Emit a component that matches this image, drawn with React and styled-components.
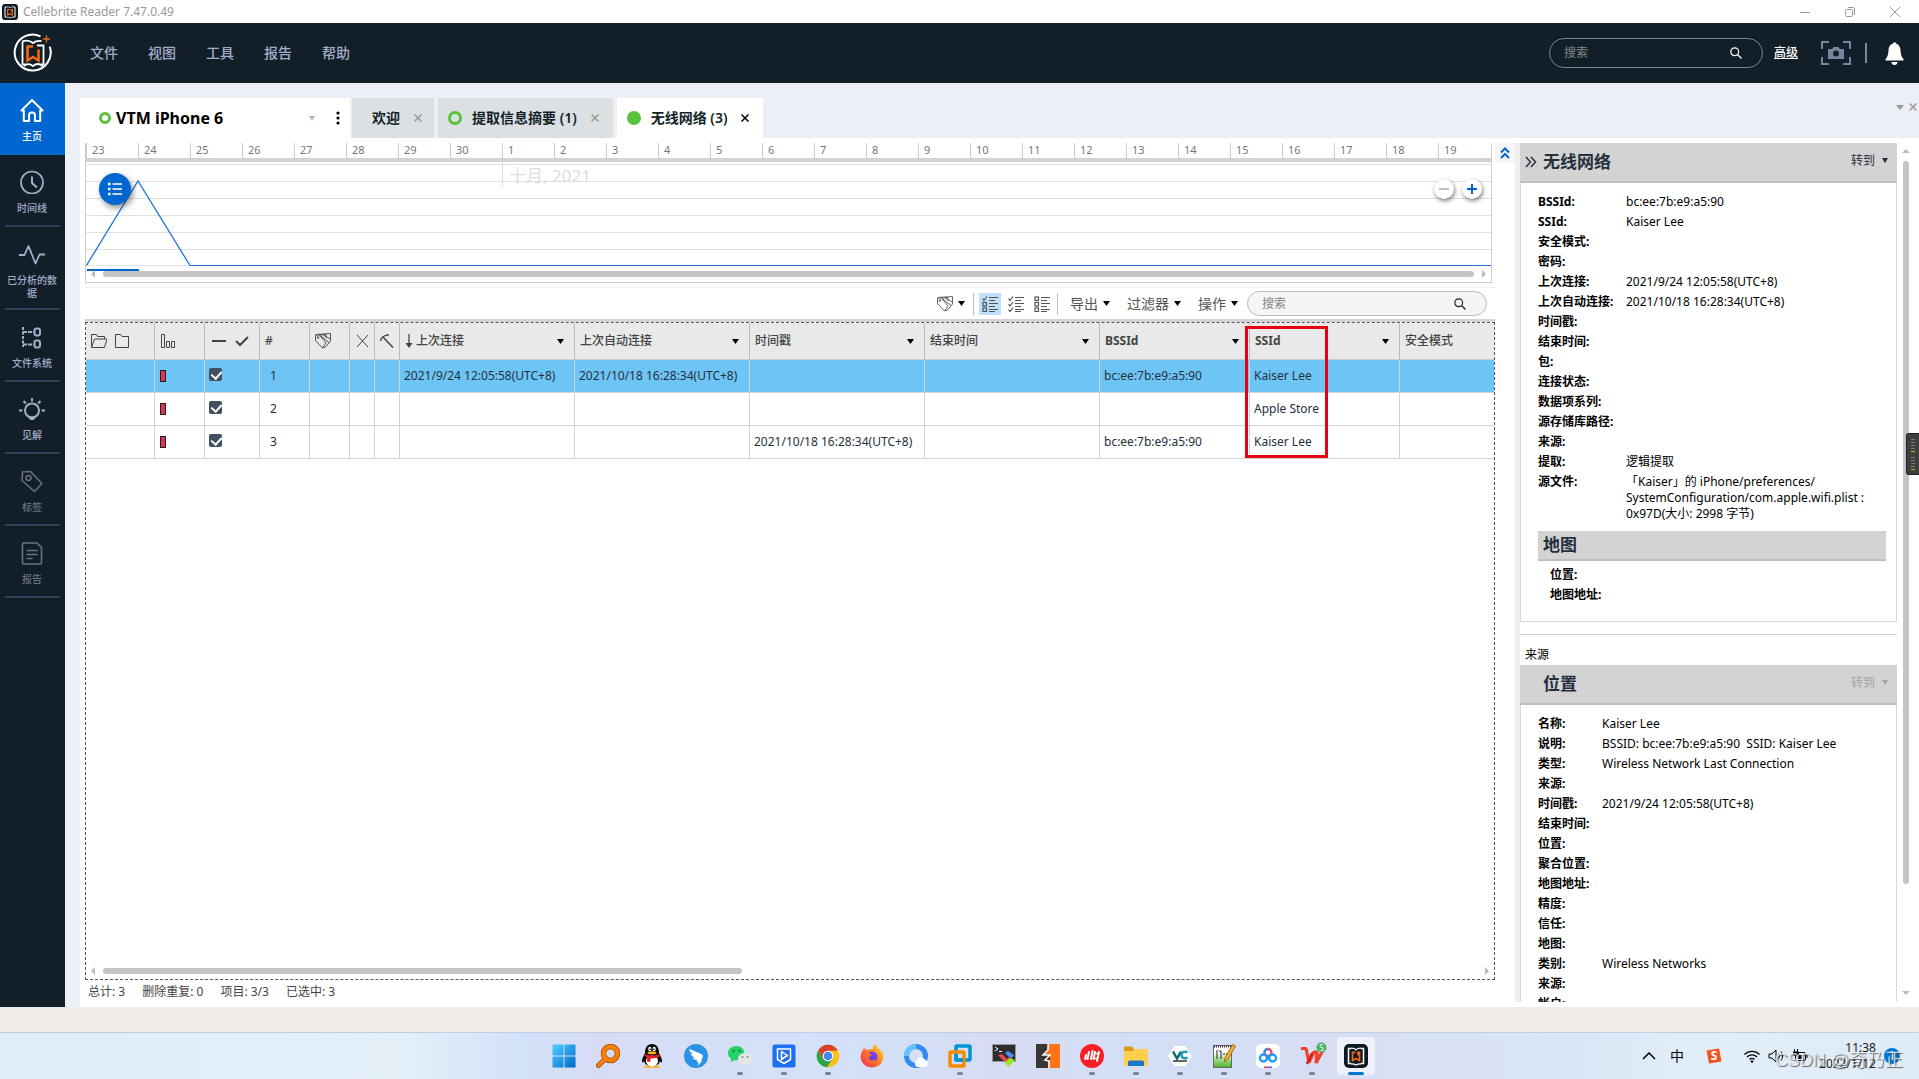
import React from 'react';
import styled, { createGlobalStyle, css } from 'styled-components';

const GlobalStyle = createGlobalStyle`
  * {
    box-sizing: border-box;
  }

  body {
    margin: 0;
    font-family: "Noto Sans", "Noto Sans CJK SC", sans-serif;
    font-size: 12px;
    line-height: 16px;
    color: #000;
    background: #fff;
  }

  button, input {
    font: inherit;
    color: inherit;
    padding: 0;
    border: none;
    background: none;
  }

  svg {
    display: block;
    flex-shrink: 0;
  }
`;

const Page = styled.div`
  display: flex;
  flex-direction: column;
  height: 100vh;
  overflow: hidden;
`;

/* window title */

const TitleBar = styled.div`
  display: flex;
  align-items: center;
  gap: 5px;
  height: 23px;
  padding: 0 18px 0 2px;
  color: #999;
`;

const AppTitle = styled.span`
  flex: 1;
`;

const WindowButton = styled.button`
  display: flex;
  justify-content: center;
  width: 12px;
  height: 12px;
  margin-left: 28px;
`;

/* top bar */

const Header = styled.header`
  display: flex;
  align-items: center;
  height: 60px;
  padding: 0 15px 0 13px;
  background: #131f28;
  color: #a3adcb;
`;

const Menu = styled.nav`
  display: flex;
  flex: 1;
  gap: 30px;
  margin-left: 37px;
`;

const MenuButton = styled.button`
  font-size: 14px;
  font-weight: 500;
`;

const HeaderSearch = styled.label`
  display: flex;
  align-items: center;
  width: 214px;
  height: 30px;
  padding: 0 20px 0 14px;
  border: 1px solid #7884a0;
  border-radius: 15px;
  color: #fff;
`;

const SearchInput = styled.input`
  flex: 1;
  min-width: 0;
  outline: none;

  &::placeholder {
    color: #858585;
    opacity: 1;
  }
`;

const AdvancedLink = styled.a`
  margin: 0 22px 0 11px;
  color: #fff;
  font-weight: 500;
`;

const HeaderDivider = styled.span`
  width: 2px;
  height: 20px;
  margin: 0 18px 0 13px;
  background: #7884a0;
`;

/* body */

const Body = styled.div`
  display: flex;
  flex: 1;
  min-height: 0;
`;

const Sidebar = styled.nav`
  width: 65px;
  background: #131f28;
`;

const SideButton = styled.button`
  display: flex;
  flex-direction: column;
  align-items: center;
  gap: 8px;
  position: relative;
  width: 65px;
  min-height: 72px;
  padding: 15px 7px 10px 6px;
  font-size: 10px;
  font-weight: 500;
  line-height: 13px;
  color: ${props => (props.$muted ? '#6b7180' : '#a3adcb')};

  ${props => props.$active
    ? css`
      background: #0066d0;
      color: #fff;
    `
    : css`
      &::after {
        content: '';
        position: absolute;
        left: 5px;
        right: 5px;
        bottom: 0;
        height: 2px;
        background: #2f3f5c;
      }
    `}
`;

const Main = styled.main`
  display: flex;
  flex: 1;
  flex-direction: column;
  min-width: 0;
  padding: 15px 0 0 15px;
  background: #ecf0f6;
`;

const Tabs = styled.div`
  display: flex;
  align-items: center;
  gap: 4px;
  height: 40px;
  padding-right: 2px;
`;

const ProjectTab = styled.div`
  display: flex;
  align-items: center;
  width: 270px;
  height: 40px;
  margin-right: -2px;
  padding: 0 5px 0 19px;
  background: #fff;
`;

const ProjectName = styled.span`
  flex: 1;
  margin-left: 5px;
  font-size: 16px;
  font-weight: 700;
`;

const KebabButton = styled.button`
  display: flex;
  margin-left: 16px;
`;

const Tab = styled.div`
  display: flex;
  align-items: center;
  height: 40px;
  padding: ${props => (props.$dot ? '0 14px 0 10px' : '0 12px 0 20px')};
  background: ${props => (props.$active ? '#fff' : '#dce0e3')};
  color: ${props => (props.$active ? '#000' : '#9a9a9a')};
`;

const TabButton = styled.button`
  display: flex;
  align-items: center;
  gap: 10px;
  margin-right: 14px;
  font-size: 14px;
  font-weight: 600;
  color: #131f28;
  white-space: nowrap;
`;

const Dot = styled.span`
  width: ${props => props.$size || 14}px;
  height: ${props => props.$size || 14}px;
  border: ${props => (props.$filled ? 7 : 3)}px solid #58c23a;
  border-radius: 50%;
`;

const CloseButton = styled.button`
  display: flex;
`;

const TabActions = styled.div`
  display: flex;
  align-items: center;
  gap: 5px;
  margin: -22px 0 0 auto;
  color: #999;
`;

const Workspace = styled.div`
  display: flex;
  flex: 1;
  min-height: 0;
  padding: 5px 0 5px 5px;
  background: #fff;
`;

const Content = styled.section`
  display: flex;
  flex: 1;
  flex-direction: column;
  min-width: 0;
`;

/* timeline */

const Timeline = styled.div`
  position: relative;
  margin-right: 3px;
  border: solid #ccc;
  border-width: 0 1px 1px;
`;

const Ruler = styled.div`
  display: flex;
  height: 19px;
  border-bottom: 4px solid #d3d3d3;
  overflow: hidden;
`;

const RulerDay = styled.span`
  flex: 0 0 52px;
  padding-left: 5px;
  border-left: 1px solid #ccc;
  font-size: 11px;
  line-height: 14px;
  color: #777;
`;

const Chart = styled.svg`
  width: 100%;
  height: 109px;
`;

const MonthLabel = styled.span`
  position: absolute;
  top: 19px;
  left: 416px;
  height: 25px;
  padding-left: 6px;
  border-left: 1px solid #ddd;
  font-size: 17px;
  line-height: 27px;
  color: #dedede;
`;

const LegendButton = styled.button`
  display: flex;
  align-items: center;
  justify-content: center;
  position: absolute;
  top: 30px;
  left: 13px;
  width: 32px;
  height: 32px;
  border-radius: 50%;
  background: #0066d0;
  box-shadow: 2px 3px 6px rgba(0, 0, 0, 0.45);
`;

const ZoomButtons = styled.div`
  display: flex;
  gap: 8px;
  position: absolute;
  top: 36px;
  right: 9px;
`;

const ZoomButton = styled.button`
  display: flex;
  align-items: center;
  justify-content: center;
  width: 20px;
  height: 20px;
  border-radius: 50%;
  background: #fff;
  box-shadow: 1px 2px 4px rgba(0, 0, 0, 0.5);
`;

const HorizontalScroll = styled.div`
  display: flex;
  align-items: center;
  gap: 6px;
  height: 11px;
  padding: 0 3px 5px;
`;

const ScrollTrack = styled.div`
  flex: 1;
`;

const ScrollThumb = styled.div`
  width: ${props => props.$width || '100%'};
  height: 6px;
  border-radius: 3px;
  background: #c4c4c4;
`;

/* toolbar */

const Toolbar = styled.div`
  display: flex;
  align-items: center;
  justify-content: flex-end;
  height: 35px;
  margin-top: 4px;
  padding: 0 8px 3px 0;
  border-top: 1px solid #eee;
  color: #555;
`;

const ToolMenus = styled.div`
  display: flex;
  gap: 17px;
  margin-right: 9px;
`;

const ToolButton = styled.button`
  display: flex;
  align-items: center;
  gap: 5px;
  font-size: 14px;
`;

const TagButton = styled(ToolButton)`
  margin-right: 8px;
`;

const ViewButton = styled.button`
  display: flex;
  align-items: center;
  justify-content: center;
  width: 22px;
  height: 22px;
  margin-right: 4px;
  background: ${props => (props.$active ? '#bfdffd' : 'none')};
`;

const ToolDivider = styled.span`
  width: 1px;
  height: 22px;
  margin-right: ${props => props.$gap}px;
  background: #bbb;
`;

const TableSearch = styled.label`
  display: flex;
  align-items: center;
  width: 240px;
  height: 25px;
  padding: 0 20px 0 14px;
  border: 1px solid #bbb;
  border-radius: 13px;
  background: #f5f5f5;
  color: #222;
`;

/* table */

const TableBox = styled.div`
  display: flex;
  flex: 1;
  flex-direction: column;
  justify-content: space-between;
  position: relative;
  min-height: 0;
  border: 1px dashed #555;
  box-shadow: 0 -3px 0 #d3d3d3;
`;

const Table = styled.table`
  width: 100%;
  table-layout: fixed;
  border-collapse: separate;
  border-spacing: 0;
`;

const HeadCell = styled.th`
  height: 37px;
  padding: 0 ${props => (props.$menu ? 10 : 5)}px 0 5px;
  border-right: 1px solid #bbb;
  border-bottom: 1px solid #ccc;
  background: #e9e9e9;
  color: #444;
  font-weight: ${props => (props.$bold ? 700 : 500)};
  text-align: left;
  white-space: nowrap;

  &:last-child {
    border-right: none;
  }
`;

const HeadContent = styled.div`
  display: flex;
  align-items: center;
  gap: ${props => props.$gap || 3}px;
`;

const HeadLabel = styled.span`
  flex: 1;
`;

const Row = styled.tr`
  background: ${props => (props.$selected ? '#6dc5f5' : '#fff')};
`;

const Cell = styled.td`
  height: 33px;
  padding: 0 4px;
  border-right: 1px solid #d3d3d3;
  border-bottom: 1px solid #d3d3d3;
  color: #24303c;
  white-space: nowrap;

  &:last-child {
    border-right: none;
  }
`;

const CheckCell = styled(Cell)`
  padding-bottom: 3px;
`;

const NumberCell = styled(Cell)`
  padding-left: 10px;
`;

const LevelMark = styled.span`
  display: block;
  width: 6px;
  height: 12px;
  margin-left: 1px;
  border: 1px solid #222;
  background: #d9344f;
`;

const Checkbox = styled.input`
  display: block;
  appearance: none;
  width: 13px;
  height: 13px;
  margin: 0;
  border-radius: 2px;
  background: #435061;
  position: relative;

  &:checked::after {
    content: '';
    position: absolute;
    top: 1px;
    left: 4px;
    width: 5px;
    height: 8px;
    border: solid #fff;
    border-width: 0 2px 2px 0;
    transform: rotate(42deg);
  }
`;

const Highlight = styled.div`
  position: absolute;
  top: 3px;
  right: 166px;
  width: 83px;
  height: 132px;
  border: 3px solid #e60012;
`;

const StatusBar = styled.footer`
  display: flex;
  gap: 17px;
  height: 22px;
  padding: 4px 3px 0;
  color: #444;
`;

/* side strips */

const CollapseStrip = styled.div`
  width: 20px;
`;

const CollapseButton = styled.button`
  display: flex;
  align-items: center;
  justify-content: center;
  width: 20px;
  height: 20px;
  background: #f5f5f5;
`;

const Splitter = styled.div`
  width: 5px;
  background: #eee;
`;

/* details */

const Details = styled.aside`
  width: 377px;
  overflow: hidden;
`;

const PanelHeader = styled.div`
  display: flex;
  align-items: center;
  height: 40px;
  padding: 0 9px 0 5px;
  border-bottom: 2px solid #bfbfbf;
  background: #d3d3d3;
`;

const PanelTitle = styled.h2`
  flex: 1;
  margin: 0 0 0 ${props => (props.$indent ? '18px' : '6px')};
  font-size: 17px;
  font-weight: 700;
  line-height: 24px;
  color: #252f3e;
`;

const GoButton = styled.button`
  display: flex;
  align-items: center;
  gap: 7px;
  margin-bottom: 3px;
  color: ${props => (props.disabled ? '#a5a5a5' : '#252f3e')};
`;

const PanelBox = styled.div`
  padding: 9px 10px 16px 17px;
  border: solid #d9d9d9;
  border-width: 0 1px 1px;
`;

const Fields = styled.dl`
  display: grid;
  grid-template-columns: ${props => props.$label || 88}px 1fr;
  margin: 0;
  padding-left: ${props => (props.$inset ? '12px' : '0')};
`;

const FieldName = styled.dt`
  padding: 2px 0;
  font-weight: 700;
  white-space: nowrap;
`;

const FieldValue = styled.dd`
  margin: 0;
  padding: 2px 0;
  white-space: pre-wrap;
`;

const SubHeader = styled.h3`
  height: 30px;
  margin: 7px 0 4px;
  padding: 0 5px;
  border-bottom: 2px solid #bfbfbf;
  background: #d3d3d3;
  font-size: 17px;
  line-height: 28px;
  color: #252f3e;
`;

const SourceLabel = styled.p`
  margin: 12px 0 0;
  padding: 12px 5px 2px;
  border-top: 1px solid #ccc;
`;

const VerticalScroll = styled.div`
  display: flex;
  flex-direction: column;
  align-items: center;
  gap: 6px;
  width: 22px;
  padding: 4px 4px 5px 0;
`;

const VerticalTrack = styled.div`
  flex: 1;
`;

const VerticalThumb = styled.div`
  width: 6px;
  height: 88%;
  border-radius: 3px;
  background: #c4c4c4;
`;

const Meter = styled.div`
  position: fixed;
  top: 433px;
  right: 0;
  width: 13px;
  height: 42px;
  border: 1px solid #222;
  border-right: none;
  border-radius: 3px 0 0 3px;
  background: #3f3f3f;
`;

/* desktop */

const DesktopStrip = styled.div`
  height: 25px;
  background: #f0ecea;
`;

const Taskbar = styled.div`
  display: grid;
  grid-template-columns: 1fr auto 1fr;
  position: relative;
  height: 47px;
  border-top: 1px solid #c0cfe8;
  background: linear-gradient(90deg, #e1eef7 0%, #e4eff8 21%, #d2e2f9 27%, #d7dcf4 31%, #d3e2f9 42%, #d6dcf3 52%, #d3dff7 60%, #d8def3 70%, #dae6f6 82%, #e1edf8 88%, #dfebf7 100%);
`;

const Apps = styled.div`
  display: flex;
  grid-column: 2;
`;

const AppButton = styled.button`
  display: flex;
  flex-direction: column;
  align-items: center;
  width: 38px;
  height: 38px;
  margin: 4px 3px;
  padding-top: 7px;
  border-radius: 4px;
  background: ${props => (props.$active ? '#eef1fb' : 'none')};
`;

const RunningMark = styled.span`
  width: ${props => (props.$active ? 16 : 6)}px;
  height: 3px;
  margin-top: 4px;
  border-radius: 2px;
  background: ${props => (props.$active ? '#0078d4' : '#7b8290')};
`;

const Tray = styled.div`
  display: flex;
  align-items: center;
  justify-content: flex-end;
  gap: 8px;
  padding-right: 19px;
`;

const TrayChevron = styled.button`
  display: flex;
  margin-right: 6px;
`;

const TrayInput = styled.button`
  display: flex;
  margin-right: 14px;
  font-size: 14px;
`;

const TraySogou = styled.button`
  display: flex;
  margin-right: 14px;
`;

const Clock = styled.div`
  margin-left: 3px;
  text-align: right;
  color: #1a1a1a;
`;

const Badge = styled.span`
  width: 16px;
  height: 16px;
  border-radius: 50%;
  background: #0078d4;
  color: #fff;
  text-align: center;
`;

const Watermark = styled.span`
  position: absolute;
  right: 16px;
  bottom: 7px;
  font-family: "Liberation Sans", "Noto Sans CJK SC", sans-serif;
  font-size: 18px;
  line-height: 24px;
  color: rgba(245, 248, 252, 0.75);
  text-shadow: 1px 1px 1px rgba(60, 60, 60, 0.75);
  white-space: nowrap;
`;

/* icons */

const Icon = ({ size = 24, width, height, box, children, ...rest }) => (
  <svg
    width={width || size}
    height={height || size}
    viewBox={box || `0 0 ${width || size} ${height || size}`}
    fill="none"
    stroke="currentColor"
    aria-hidden="true"
    {...rest}
  >
    {children}
  </svg>
);

const Caret = ({ size = 7 }) => (
  <svg width={size} height="5" viewBox="0 0 8 5" preserveAspectRatio="none" aria-hidden="true">
    <path d="M0 0h8L4 5z" fill="currentColor" />
  </svg>
);

const BlackCaret = styled.span`
  color: #000;
`;

const GreyCaret = styled.span`
  color: #b0b4b8;
`;

const ScrollArrow = ({ d }) => (
  <svg width="8" height="8" viewBox="0 0 8 8" aria-hidden="true">
    <path d={d} fill="#b9b9b9" />
  </svg>
);

const Cross = () => (
  <Icon size={8} strokeWidth="1.5"><path d="M.5.5l7 7M7.5.5l-7 7" /></Icon>
);

const Magnifier = ({ size = 12 }) => (
  <Icon size={size} box="0 0 12 12" strokeWidth="1.2">
    <circle cx="4.7" cy="4.7" r="3.9" />
    <path d="M7.5 7.5l4 4" />
  </Icon>
);

const TagsIcon = () => (
  <Icon size={16} strokeWidth=".9">
    <path d="M.5 2h4l6.500 8-3.500 5-7-7.500z" />
    <path d="M4.500 2l6.500-.5v3.500M1 1.500L15.500.500V8l-5 6-3 1M4.500 2l9.500 7.500M8 2l7.500 4" />
    <circle cx="3" cy="4.500" r=".9" />
  </Icon>
);

const ReaderMark = () => (
  <>
    <path d="M7 4.500H4.500v15H7M17 4.500h2.500v15H17" stroke="#fff" strokeWidth="1.500" />
    <path d="M7 4.200c2 0 4 .3 5 1.600 1-1.300 3-1.600 5-1.600M7 19.800c2 0 4 .2 5 1.300 1-1.100 3-1.300 5-1.300" stroke="#fff" strokeWidth="1.200" />
    <path d="M11.500 8.300H8.500v8.200l3.500-2 3.500 2V8.300h-1.500v3" stroke="#f26a10" strokeWidth="1.700" />
  </>
);

const HeaderLogo = () => (
  <Icon size={40} strokeWidth="2">
    <path d="M27.500 3.300A18 18 0 1 0 36.700 13.600" stroke="#fff" />
    <path d="M33.500 2.500v7M30 6h7" stroke="#f26a10" strokeWidth="1.300" />
    <path d="M9.500 9v22.500h3.500M24 12.500h6.500v19H28" stroke="#fff" strokeWidth="1.800" />
    <path d="M9 8.500c4.500-1.500 8-1 11 1.500 2.500-2 5-2.500 8.500-2M11 33c3.500-3 6.500-2 9 0 2.500-2 6-3 9.500 0" stroke="#fff" strokeWidth="1.800" />
    <path d="M20 13.500h-5.500v14l5.500-3.500 5.500 3.500v-11" stroke="#f26a10" strokeWidth="2.600" />
  </Icon>
);

const CameraIcon = () => (
  <Icon width={32} height={24} strokeWidth="2" stroke="#7884a0">
    <path d="M9 1H2v7M23 1h7v7M9 23H2v-7M23 23h7v-7" />
    <path d="M8 8h4l1.500-2h5L20 8h4v10H8z" fill="#7884a0" stroke="none" />
    <circle cx="16" cy="12.500" r="3" fill="#131f28" stroke="none" />
  </Icon>
);

const BellIcon = () => (
  <Icon width={19} height={23} fill="#fff" stroke="none">
    <circle cx="9.500" cy="2" r="1.800" />
    <path d="M9.500 1.500c4 0 5.800 3 6 7 .200 4.500 1.500 7 3 8.500v1.500H.5V17c1.500-1.500 2.800-4 3-8.500.2-4 2-7 6-7z" />
    <path d="M6.500 20h6c0 1.800-1.200 3-3 3s-3-1.200-3-3z" />
  </Icon>
);

const sideIcons = {
  home: (
    <Icon size={24} strokeWidth="2" strokeLinejoin="round">
      <path d="M1.500 12.500L12 2l10.500 10.500h-2.300V23H15v-5.500a3 3 0 0 0-6 0V23H3.800V12.500z" />
    </Icon>
  ),
  clock: (
    <Icon size={24} strokeWidth="1.700">
      <circle cx="12" cy="12.500" r="11" />
      <path d="M12 6.500v6.500l5 4.500" strokeWidth="2" />
    </Icon>
  ),
  pulse: (
    <Icon width={26} height={24} strokeWidth="1.800" strokeLinejoin="round">
      <path d="M0 13h5.500L9.500 4l7 17.500 4-9H26" />
    </Icon>
  ),
  tree: (
    <Icon size={24} strokeWidth="2">
      <path d="M3 2v20" strokeDasharray="3 1.500" />
      <path d="M3 7h11M3 19.500h11" strokeDasharray="4 1" />
      <rect x="14.500" y="3.500" width="5.500" height="7" rx="2" />
      <rect x="14.500" y="15.500" width="5.500" height="7" rx="2" />
    </Icon>
  ),
  bulb: (
    <Icon width={26} height={24} strokeWidth="2">
      <circle cx="13" cy="13.500" r="7" />
      <path d="M13 1v3.500M4.500 4l2.500 2.500M21.500 4L19 6.500M0 13.500h3.500M22.500 13.500H26" />
      <path d="M9 19.500h8L15 23h-4z" fill="currentColor" stroke="none" />
    </Icon>
  ),
  tag: (
    <Icon size={24} strokeWidth="1.500" strokeLinejoin="round">
      <path d="M2.500 3l8-.500L22 14.500l-7.500 8L2 11.500z" />
      <circle cx="8.500" cy="9" r="2.500" />
    </Icon>
  ),
  report: (
    <Icon size={24} strokeWidth="1.600" strokeLinejoin="round">
      <path d="M3.500 2H17l4.500 4.500V22l-1 1h-17l-1-1V3z" />
      <path d="M6.500 9.500h11M6.500 13.500h11M6.500 17.500h6" />
    </Icon>
  ),
};

const viewIcons = [
  <Icon size={16} key="first" strokeWidth="1.200">
    <path d="M.5 2.500l1.500 2 3-4M7 1.500h9M7 4.500h6M7 7.500h9M7 10.500h6M7 13.500h9M7 15.500h6" />
    <rect x="1" y="6.500" width="3.500" height="3.500" />
    <rect x="1" y="12" width="3.500" height="3.500" />
  </Icon>,
  <Icon size={16} key="checked" strokeWidth="1.200">
    <path d="M.5 2.500l1.500 2 3-4M.5 8l1.500 2 3-4M.5 13.500l1.500 2 3-4M7 1.500h9M7 4.500h6M7 7.500h9M7 10.500h6M7 13.500h9M7 15.500h6" />
  </Icon>,
  <Icon size={16} key="all" strokeWidth="1.200">
    <path d="M7 1.500h9M7 4.500h6M7 7.500h9M7 10.500h6M7 13.500h9M7 15.500h6" />
    <rect x="1" y="1" width="3.500" height="3.500" />
    <rect x="1" y="6.500" width="3.500" height="3.500" />
    <rect x="1" y="12" width="3.500" height="3.500" />
  </Icon>,
];

const appIcons = {
  Windows: (
    <Icon stroke="none">
      <defs>
        <linearGradient id="win" x1="0" y1="0" x2="1" y2="1">
          <stop offset="0" stopColor="#4fd0ff" />
          <stop offset="1" stopColor="#0067c8" />
        </linearGradient>
      </defs>
      <path d="M.5.500h11v11H.5zM12.500.500h11v11h-11zM.5 12.500h11v11H.5zM12.500 12.500h11v11h-11z" fill="url(#win)" />
    </Icon>
  ),
  Everything: (
    <Icon>
      <circle cx="14.500" cy="9.500" r="7" stroke="#a84a05" strokeWidth="5.500" />
      <path d="M9 15l-6.500 6.500" stroke="#a84a05" strokeWidth="5" strokeLinecap="round" />
      <circle cx="14.500" cy="9.500" r="7" stroke="#ff8000" strokeWidth="4" />
      <path d="M9.500 14.500l-7 7" stroke="#ff8000" strokeWidth="3.200" strokeLinecap="round" />
    </Icon>
  ),
  QQ: (
    <Icon stroke="none">
      <path d="M12 0c5 0 7 4 7 9 1 2 3 5 3 8 0 2-1 2-2 0-1 4-4 5-8 5s-7-1-8-5c-1 2-2 2-2 0 0-3 2-6 3-8 0-5 2-9 7-9z" fill="#080808" />
      <ellipse cx="12" cy="17" rx="6" ry="5.500" fill="#fff" />
      <ellipse cx="9.800" cy="5" rx="1.600" ry="2.300" fill="#fff" />
      <ellipse cx="14.200" cy="5" rx="1.600" ry="2.300" fill="#fff" />
      <circle cx="10.200" cy="5.200" r=".8" fill="#000" />
      <circle cx="13.800" cy="5.200" r=".8" fill="#000" />
      <ellipse cx="12" cy="8.700" rx="4.500" ry="1.500" fill="#ffae12" />
      <path d="M5 10c4 2 10 2 14 0l.8 2.500c-3 1.500-6 2-9 1.800L10 18l-3-.5.300-4L4.500 12z" fill="#ec1c24" />
      <path d="M4 23c1-2 6-2 7.500 0v.8H4zM12.500 23c1-2 6-2 7.500 0v.8h-7.500z" fill="#ffae12" />
    </Icon>
  ),
  DingTalk: (
    <Icon stroke="none">
      <circle cx="12" cy="12" r="12" fill="#2b92e8" />
      <path d="M5 5c5 2 9 3 13.500 6 1 1-.5 3.500-1.500 5.500h1.500L13.500 22l1-4h-2l.8-2c-3 0-4-1-4.800-2.500l3 .2C8 12.500 7 11 6.500 9.500l3 .8C6.500 8.500 5.300 7 5 5z" fill="#fff" />
    </Icon>
  ),
  WeChat: (
    <Icon stroke="none">
      <path d="M8.500 2C3.500 2 0 5 0 9c0 2.500 1.200 4.500 3.200 5.800L2.800 18l3.500-1.800c5 .8 10-2 10-7.200 0-4-3.300-7-7.800-7z" fill="#25d366" />
      <path d="M17 9c-4 0-7 2.600-7 6s3 6.200 7 6.200c1 0 2-.2 2.800-.5L22.500 22l-.6-2.500c1.300-1.200 2.100-2.700 2.100-4.500 0-3.400-3-6-7-6z" fill="#e6e6e6" />
      <g fill="#178a42"><circle cx="5.500" cy="7" r="1.200" /><circle cx="11.500" cy="7" r="1.200" /></g>
      <g fill="#888"><circle cx="14.500" cy="13" r="1" /><circle cx="19.500" cy="13" r="1" /></g>
    </Icon>
  ),
  Shield: (
    <Icon stroke="#fff" strokeWidth="1.500">
      <rect x=".5" y=".5" width="23" height="23" rx="2.500" fill="#1d6ff0" stroke="none" />
      <path d="M5.500 5h13v10.500L12 19.500l-6.500-4z" />
      <path d="M9.500 7.500v8l6-4z" strokeLinejoin="round" />
      <path d="M9 15.500l6-4" />
    </Icon>
  ),
  Chrome: (
    <Icon stroke="none">
      <circle cx="12" cy="12" r="11.300" fill="#fbc116" />
      <path d="M2.200 6.400A11.300 11.300 0 0 1 21.800 6.400L12 6.700l-4.800 8z" fill="#d84030" />
      <path d="M2.200 6.400A11.300 11.300 0 0 0 11 23.300L16.700 14.500 12 17.500l-4.800-2.500z" fill="#2ba24c" />
      <circle cx="12" cy="12" r="5.300" fill="#fff" />
      <circle cx="12" cy="12" r="4.300" fill="#3f86f4" />
    </Icon>
  ),
  Firefox: (
    <Icon stroke="none">
      <defs>
        <linearGradient id="fox" x1="1" y1="0" x2="0" y2="1">
          <stop offset="0" stopColor="#ffe53b" />
          <stop offset=".5" stopColor="#ff7a26" />
          <stop offset="1" stopColor="#f4216b" />
        </linearGradient>
      </defs>
      <path d="M4 4c1 .3 1.500 1.500 2.500 2C8.500 5 11 5 13 5c-.5-2 .5-4 2.500-5 .2 3 5 5 6 8 .3-.5.300-1.500 0-2 4 7 1.500 17.500-9.500 17.500C4 23.500-1.500 16 1.500 8.500 2 7 3 6 4 4z" fill="url(#fox)" />
      <circle cx="12" cy="13" r="5.500" fill="#7542e5" />
      <path d="M5 9c3-1 5 .5 7 1.500-1 2-3.500 1.500-3.500 3.500 1 3 5 3 7 1 .5 3-2 4.500-4.500 4.500C7 19 4.500 14 5 9z" fill="#ff6a2a" />
    </Icon>
  ),
  QQBrowser: (
    <Icon>
      <circle cx="12" cy="12" r="9.500" stroke="#2f8cf0" strokeWidth="5" />
      <path d="M2.500 12A9.500 9.500 0 0 1 12 2.500" stroke="#65c4fb" strokeWidth="5" />
      <path d="M13 23a4 4 0 0 1 0-7c1-3.500 6-3.500 7.500-.5 4 .5 4.500 7 .5 7.500z" fill="#fff" stroke="none" />
    </Icon>
  ),
  VMware: (
    <Icon strokeWidth="3.500" strokeLinejoin="round">
      <rect x="8" y="2" width="14" height="14" rx="1" stroke="#0095d5" />
      <rect x="2" y="8" width="14" height="14" rx="1" stroke="#f38b00" />
      <path d="M8 10v6h7" stroke="#0095d5" />
    </Icon>
  ),
  MobaXterm: (
    <Icon strokeWidth="1">
      <rect x=".5" y=".5" width="23" height="17" fill="#2d2e30" stroke="#999" />
      <path d="M3 3l3 2-3 2M7 7.500h3" stroke="#fff" />
      <path d="M6 11l4-1 5 5 2-2 2 2-5 4z" fill="#ee4848" stroke="none" />
      <path d="M13 9l3-2 6 4-2 3-3-1z" fill="#528bf4" stroke="none" />
      <path d="M13 18l5-4 5 2-7 7z" fill="#94e916" stroke="none" />
    </Icon>
  ),
  Burp: (
    <Icon stroke="none">
      <path d="M0 0h24v24H0z" fill="#ff7417" />
      <path d="M0 0h11v6l-3 5h6v5l-2 1v7H0z" fill="#3a3634" />
      <path d="M12.500 0L12 6l-5 5h7L9 16l4 1v7" fill="none" stroke="#fff" strokeWidth="1.500" />
    </Icon>
  ),
  Player: (
    <Icon stroke="#fff" strokeWidth="2" strokeLinecap="round">
      <circle cx="12" cy="12" r="12" fill="#fa1d23" stroke="none" />
      <path d="M6 11l-1 4M9 8l-1.500 7M12.500 7L11 15M15 8l-1.500 7M19 8l-2 9" />
      <path d="M5.500 14.500h2.500M14 14.500h3M16 9.500h2.500" strokeWidth="1.500" />
    </Icon>
  ),
  Explorer: (
    <Icon stroke="none">
      <path d="M0 2.500h8l2.500 3H22v7H0z" fill="#d99b13" />
      <path d="M0 7h8l2.500-2H24v17H0z" fill="#fdcf4c" />
      <path d="M4 22v-3.500a2 2 0 0 1 2-2h12a2 2 0 0 1 2 2V22z" fill="#1677c8" />
    </Icon>
  ),
  VeraCrypt: (
    <Icon stroke="none">
      <path d="M6.500 2h11L24 12l-6.500 10h-11L0 12z" fill="#fff" />
      <path d="M5 7.500l4 7 4-7" fill="none" stroke="#0a6b78" strokeWidth="2.500" />
      <path d="M19.500 8.500c-2-1.500-6-1-6 2.500s4 4 6 2.500" fill="none" stroke="#1f9cb4" strokeWidth="2.500" />
      <path d="M5 17h14" stroke="#333" strokeWidth="1.500" />
    </Icon>
  ),
  Notepad: (
    <Icon strokeWidth="1">
      <defs>
        <linearGradient id="pad" x1="0" y1="0" x2="0" y2="1">
          <stop offset=".3" stopColor="#fff" />
          <stop offset="1" stopColor="#45b51b" />
        </linearGradient>
      </defs>
      <rect x="1.500" y="1.500" width="18" height="22" fill="url(#pad)" stroke="#666" />
      <path d="M2 2.500h17" stroke="#333" strokeDasharray="1 1" strokeWidth="2" />
      <path d="M5 6v9M7 7h2v8M11 10h2M14 10h2" stroke="#222" />
      <path d="M20.500.500l3 1.500-8 14-3 2 .3-3.800z" fill="#efb236" stroke="#a26c16" />
    </Icon>
  ),
  Netdisk: (
    <Icon>
      <rect width="24" height="24" rx="5" fill="#fff" stroke="none" />
      <circle cx="12" cy="8.500" r="3.500" stroke="#f4435e" strokeWidth="2.300" />
      <circle cx="7.500" cy="14" r="3.500" stroke="#1f9bf7" strokeWidth="2.300" />
      <circle cx="16.500" cy="14" r="3.500" stroke="#1f9bf7" strokeWidth="2.300" />
      <path d="M8.500 8.500a3.500 3.500 0 0 1 3.500-3.500M10 16l4-4" stroke="#1f9bf7" strokeWidth="2.300" />
      <path d="M8 23.500h4" stroke="#f4435e" strokeWidth="2" />
      <path d="M12 23.500h4" stroke="#3f6ef7" strokeWidth="2" />
    </Icon>
  ),
  WPS: (
    <Icon overflow="visible">
      <path d="M1 4.500h5l3 14L14 8h3l-1 11 6.500-12" stroke="#f2402d" strokeWidth="3.200" strokeLinejoin="bevel" />
      <path d="M7 20l5-11" stroke="#c92519" strokeWidth="2.500" />
      <circle cx="21.500" cy="3.500" r="5" fill="#4db35e" stroke="none" />
      <text x="21.500" y="6.500" fill="#fff" stroke="none" fontSize="8" textAnchor="middle">S</text>
    </Icon>
  ),
  Reader: (
    <Icon>
      <rect width="24" height="24" rx="5" fill="#0d1a22" stroke="none" />
      <ReaderMark />
    </Icon>
  ),
};

const runningApps = ['WeChat', 'Shield', 'Chrome', 'VMware', 'Player', 'Explorer', 'VeraCrypt', 'Notepad', 'Netdisk', 'WPS', 'Reader'];

/* data */

const menus = ['文件', '视图', '工具', '报告', '帮助'];

const sideItems = [
  { icon: 'home', label: '主页', active: true },
  { icon: 'clock', label: '时间线' },
  { icon: 'pulse', label: '已分析的数据' },
  { icon: 'tree', label: '文件系统' },
  { icon: 'bulb', label: '见解' },
  { icon: 'tag', label: '标签', muted: true },
  { icon: 'report', label: '报告', muted: true },
];

const days = [23, 24, 25, 26, 27, 28, 29, 30];
for (let day = 1; day <= 19; day++) days.push(day);

const columnWidths = [69, 50, 55, 50, 40, 25, 25, 175, 175, 175, 175, 150, 150];

const columns = [
  { title: '上次连接', sorted: true, menu: true },
  { title: '上次自动连接', menu: true },
  { title: '时间戳', menu: true },
  { title: '结束时间', menu: true },
  { title: 'BSSId', bold: true, menu: true },
  { title: 'SSId', bold: true, menu: true },
  { title: '安全模式' },
];

const rows = [
  ['2021/9/24 12:05:58(UTC+8)', '2021/10/18 16:28:34(UTC+8)', '', '', 'bc:ee:7b:e9:a5:90', 'Kaiser Lee', ''],
  ['', '', '', '', '', 'Apple Store', ''],
  ['', '', '2021/10/18 16:28:34(UTC+8)', '', 'bc:ee:7b:e9:a5:90', 'Kaiser Lee', ''],
];

const networkFields = [
  ['BSSId', 'bc:ee:7b:e9:a5:90'],
  ['SSId', 'Kaiser Lee'],
  ['安全模式'],
  ['密码'],
  ['上次连接', '2021/9/24 12:05:58(UTC+8)'],
  ['上次自动连接', '2021/10/18 16:28:34(UTC+8)'],
  ['时间戳'],
  ['结束时间'],
  ['包'],
  ['连接状态'],
  ['数据项系列'],
  ['源存储库路径'],
  ['来源'],
  ['提取', '逻辑提取'],
  ['源文件', '「Kaiser」的 iPhone/preferences/\nSystemConfiguration/com.apple.wifi.plist :\n0x97D(大小: 2998 字节)'],
];

const mapFields = [['位置'], ['地图地址']];

const locationFields = [
  ['名称', 'Kaiser Lee'],
  ['说明', 'BSSID: bc:ee:7b:e9:a5:90  SSID: Kaiser Lee'],
  ['类型', 'Wireless Network Last Connection'],
  ['来源'],
  ['时间戳', '2021/9/24 12:05:58(UTC+8)'],
  ['结束时间'],
  ['位置'],
  ['聚合位置'],
  ['地图地址'],
  ['精度'],
  ['信任'],
  ['地图'],
  ['类别', 'Wireless Networks'],
  ['来源'],
  ['帐户'],
];

function FieldList({ fields, label, inset }) {
  return (
    <Fields $label={label} $inset={inset}>
      {fields.map(([name, value], i) => (
        <React.Fragment key={i}>
          <FieldName>{name}:</FieldName>
          <FieldValue>{value}</FieldValue>
        </React.Fragment>
      ))}
    </Fields>
  );
}

function TimelineChart() {
  return (
    <Timeline>
      <Ruler>
        {days.map((day, i) => <RulerDay key={i}>{day}</RulerDay>)}
      </Ruler>
      <MonthLabel>十月, 2021</MonthLabel>
      <Chart aria-hidden="true">
        {[2, 19, 36, 53, 70, 87, 103].map(y => (
          <line key={y} x1="0" x2="100%" y1={y + 0.5} y2={y + 0.5} stroke="#e0e0e0" />
        ))}
        <polyline points="0.5,103.5 52,19 104,103.5" fill="none" stroke="#1f74d4" strokeWidth="1.3" />
        <line x1="104" x2="100%" y1="103.5" y2="103.5" stroke="#1f74d4" />
        <rect x="1" y="107" width="52" height="2" fill="#0066d0" />
      </Chart>
      <HorizontalScroll>
        <ScrollArrow d="M6 0v8L2 4z" />
        <ScrollTrack><ScrollThumb /></ScrollTrack>
        <ScrollArrow d="M2 0v8l4-4z" />
      </HorizontalScroll>
      <LegendButton aria-label="图例">
        <Icon width={16} height={14} stroke="#fff" strokeWidth="1.300">
          <path d="M5.500 2h9.500M5.500 7h9.500M5.500 12h9.500" />
          <path d="M1 2h2.500M1 7h2.500M1 12h2.500" strokeWidth="2.500" />
        </Icon>
      </LegendButton>
      <ZoomButtons>
        <ZoomButton aria-label="缩小">
          <Icon size={10} strokeWidth="2" stroke="#c0c0c0"><path d="M0 5h10" /></Icon>
        </ZoomButton>
        <ZoomButton aria-label="放大">
          <Icon size={10} strokeWidth="2" stroke="#0066d0"><path d="M0 5h10M5 0v10" /></Icon>
        </ZoomButton>
      </ZoomButtons>
    </Timeline>
  );
}

function NetworkTable() {
  const [checked, setChecked] = React.useState([true, true, true]);

  const toggle = index => {
    setChecked(checked.map((value, i) => (i === index ? !value : value)));
  };

  return (
    <TableBox>
      <Table>
        <colgroup>
          {columnWidths.map((width, i) => <col key={i} width={width} />)}
          <col />
        </colgroup>
        <thead>
          <tr>
            <HeadCell>
              <HeadContent $gap={8}>
                <Icon size={16}><path d="M.5 14V1.500h5l1 2h7V6M.5 14.500L3.500 6H16l-2.500 8.500z" /></Icon>
                <Icon size={16}><path d="M.5 14.500v-13h5l1.500 2h6.500v11z" /></Icon>
              </HeadContent>
            </HeadCell>
            <HeadCell>
              <Icon size={16}>
                <path d="M1.500 1.500h3v13h-3zM6.500 8.500h3v6h-3zM11.500 8.500h3v6h-3z" />
              </Icon>
            </HeadCell>
            <HeadCell>
              <HeadContent $gap={9}>
                <Icon width={16} height={14} strokeWidth="2"><path d="M2 7h14" /></Icon>
                <Icon width={14} height={14} strokeWidth="2"><path d="M1 7l4 4 8-8" /></Icon>
              </HeadContent>
            </HeadCell>
            <HeadCell>#</HeadCell>
            <HeadCell><TagsIcon /></HeadCell>
            <HeadCell><Icon size={14}><path d="M2 1l11 12M13 1L2 13" /></Icon></HeadCell>
            <HeadCell>
              <Icon size={14} strokeWidth="1.500"><path d="M3 3l10 10.500M.5 7C1 4 4 1 9 .8" /></Icon>
            </HeadCell>
            {columns.map(column => (
              <HeadCell key={column.title} $bold={column.bold} $menu={column.menu}>
                <HeadContent>
                  {column.sorted && (
                    <Icon width={8} height={14}>
                      <path d="M4 0v12" strokeWidth="1.300" />
                      <path d="M.5 9h7L4 14z" fill="currentColor" stroke="none" />
                    </Icon>
                  )}
                  <HeadLabel>{column.title}</HeadLabel>
                  {column.menu && <BlackCaret><Caret /></BlackCaret>}
                </HeadContent>
              </HeadCell>
            ))}
          </tr>
        </thead>
        <tbody>
          {rows.map((row, i) => (
            <Row key={i} $selected={i === 0}>
              <Cell />
              <Cell><LevelMark /></Cell>
              <CheckCell>
                <Checkbox
                  type="checkbox"
                  aria-label={`选择 ${i + 1}`}
                  checked={checked[i]}
                  onChange={() => toggle(i)}
                />
              </CheckCell>
              <NumberCell>{i + 1}</NumberCell>
              <Cell />
              <Cell />
              <Cell />
              {row.map((value, j) => <Cell key={j}>{value}</Cell>)}
            </Row>
          ))}
        </tbody>
      </Table>
      <HorizontalScroll>
        <ScrollArrow d="M6 0v8L2 4z" />
        <ScrollTrack><ScrollThumb $width="46.5%" /></ScrollTrack>
        <ScrollArrow d="M2 0v8l4-4z" />
      </HorizontalScroll>
      <Highlight />
    </TableBox>
  );
}

function DetailsPanel() {
  return (
    <Details>
      <PanelHeader>
        <Icon size={12} strokeWidth="1.500" stroke="#252f3e">
          <path d="M1 1l4.500 5L1 11M6 1l4.500 5L6 11" />
        </Icon>
        <PanelTitle>无线网络</PanelTitle>
        <GoButton>转到 <Caret size={6} /></GoButton>
      </PanelHeader>
      <PanelBox>
        <FieldList fields={networkFields} />
        <SubHeader>地图</SubHeader>
        <FieldList fields={mapFields} inset />
      </PanelBox>
      <SourceLabel>来源</SourceLabel>
      <PanelHeader>
        <PanelTitle $indent>位置</PanelTitle>
        <GoButton disabled>转到 <Caret size={6} /></GoButton>
      </PanelHeader>
      <PanelBox>
        <FieldList fields={locationFields} label={64} />
      </PanelBox>
    </Details>
  );
}

function App() {
  return (
    <Page>
      <GlobalStyle />
      <TitleBar>
        <Icon size={16} box="0 0 24 24">
          <rect width="24" height="24" rx="5" fill="#0d1a22" stroke="none" />
          <ReaderMark />
        </Icon>
        <AppTitle>Cellebrite Reader 7.47.0.49</AppTitle>
        <WindowButton aria-label="最小化"><Icon size={12}><path d="M1 6.500h10" /></Icon></WindowButton>
        <WindowButton aria-label="还原">
          <Icon size={12}>
            <rect x="1.500" y="3.500" width="7" height="7" rx="1" />
            <path d="M4 1.500h5a1.500 1.500 0 0 1 1.500 1.500v6" />
          </Icon>
        </WindowButton>
        <WindowButton aria-label="关闭"><Icon size={12}><path d="M1 1l10 10M11 1L1 11" /></Icon></WindowButton>
      </TitleBar>

      <Header>
        <HeaderLogo />
        <Menu>
          {menus.map(menu => <MenuButton key={menu}>{menu}</MenuButton>)}
        </Menu>
        <HeaderSearch>
          <SearchInput placeholder="搜索" aria-label="搜索" />
          <Magnifier />
        </HeaderSearch>
        <AdvancedLink href="#advanced">高级</AdvancedLink>
        <CameraIcon />
        <HeaderDivider />
        <BellIcon />
      </Header>

      <Body>
        <Sidebar>
          {sideItems.map(item => (
            <SideButton key={item.icon} $active={item.active} $muted={item.muted}>
              {sideIcons[item.icon]}
              {item.label}
            </SideButton>
          ))}
        </Sidebar>

        <Main>
          <Tabs>
            <ProjectTab>
              <Dot $size={12} />
              <ProjectName>VTM iPhone 6</ProjectName>
              <GreyCaret><Caret size={6} /></GreyCaret>
              <KebabButton aria-label="更多">
                <Icon width={14} height={14} fill="#000" stroke="none">
                  <circle cx="7" cy="2" r="1.600" />
                  <circle cx="7" cy="7" r="1.600" />
                  <circle cx="7" cy="12" r="1.600" />
                </Icon>
              </KebabButton>
            </ProjectTab>
            <Tab>
              <TabButton>欢迎</TabButton>
              <CloseButton aria-label="关闭"><Cross /></CloseButton>
            </Tab>
            <Tab $dot>
              <TabButton><Dot />提取信息摘要 (1)</TabButton>
              <CloseButton aria-label="关闭"><Cross /></CloseButton>
            </Tab>
            <Tab $dot $active>
              <TabButton><Dot $filled />无线网络 (3)</TabButton>
              <CloseButton aria-label="关闭"><Cross /></CloseButton>
            </Tab>
            <TabActions>
              <Caret size={8} />
              <Cross />
            </TabActions>
          </Tabs>

          <Workspace>
            <Content>
              <TimelineChart />
              <Toolbar>
                <TagButton aria-label="标签"><TagsIcon /><BlackCaret><Caret /></BlackCaret></TagButton>
                <ToolDivider $gap={5} />
                {viewIcons.map((icon, i) => (
                  <ViewButton key={i} $active={i === 0} aria-label={`视图 ${i + 1}`}>{icon}</ViewButton>
                ))}
                <ToolDivider $gap={12} />
                <ToolMenus>
                  <ToolButton>导出 <BlackCaret><Caret /></BlackCaret></ToolButton>
                  <ToolButton>过滤器 <BlackCaret><Caret /></BlackCaret></ToolButton>
                  <ToolButton>操作 <BlackCaret><Caret /></BlackCaret></ToolButton>
                </ToolMenus>
                <TableSearch>
                  <SearchInput placeholder="搜索" aria-label="表格搜索" />
                  <Magnifier />
                </TableSearch>
              </Toolbar>
              <NetworkTable />
              <StatusBar>
                <span>总计: 3</span>
                <span>删除重复: 0</span>
                <span>项目: 3/3</span>
                <span>已选中: 3</span>
              </StatusBar>
            </Content>
            <CollapseStrip>
              <CollapseButton aria-label="折叠">
                <Icon size={12} strokeWidth="2" stroke="#0066d0">
                  <path d="M2 5.500l4-4 4 4M2 11l4-4 4 4" />
                </Icon>
              </CollapseButton>
            </CollapseStrip>
            <Splitter />
            <DetailsPanel />
            <VerticalScroll>
              <ScrollArrow d="M0 6h8L4 2z" />
              <VerticalTrack><VerticalThumb /></VerticalTrack>
              <ScrollArrow d="M0 2h8L4 6z" />
            </VerticalScroll>
          </Workspace>
        </Main>
      </Body>

      <DesktopStrip />
      <Taskbar>
        <Apps>
          {Object.keys(appIcons).map(name => (
            <AppButton key={name} aria-label={name} $active={name === 'Reader'}>
              {appIcons[name]}
              {runningApps.includes(name) && <RunningMark $active={name === 'Reader'} />}
            </AppButton>
          ))}
        </Apps>
        <Tray>
          <TrayChevron aria-label="显示隐藏的图标">
            <Icon width={14} height={8} strokeWidth="1.500"><path d="M1 7l6-6 6 6" /></Icon>
          </TrayChevron>
          <TrayInput>中</TrayInput>
          <TraySogou aria-label="搜狗输入法">
            <Icon size={16} stroke="none" overflow="visible">
              <path d="M.5 2.500L13 .5l2.500 13-12.500 2z" fill="#f4511e" />
              <text x="8" y="12" fill="#fff" fontSize="12" fontWeight="700" textAnchor="middle">S</text>
            </Icon>
          </TraySogou>
          <Icon size={16} strokeWidth="1.300">
            <path d="M.5 6.500a10.500 10.500 0 0 1 15 0M3 9a7 7 0 0 1 10 0M5.500 11.500a3.500 3.500 0 0 1 5 0" />
            <circle cx="8" cy="13.500" r="1.200" fill="currentColor" stroke="none" />
          </Icon>
          <Icon size={16}>
            <path d="M1 6h3l4-4v12l-4-4H1zM10.500 5.500a4 4 0 0 1 0 5M13 3.500a7 7 0 0 1 0 9" />
          </Icon>
          <Icon size={16}>
            <rect x="3.500" y="4.500" width="10" height="8" rx="1.500" />
            <path d="M15 7v3M2.500 1v3M5.500 1v3" />
            <path d="M1 3.500h6v3L4 8.500l-3-2zM7 7h3v4H6z" fill="currentColor" stroke="none" />
          </Icon>
          <Clock>
            <div>11:38</div>
            <div>2022/1/12</div>
          </Clock>
          <Badge>1</Badge>
        </Tray>
        <Watermark>CSDN @奇乃正</Watermark>
      </Taskbar>

      <Meter>
        <Icon width={12} height={40} stroke="#777">
          <path d="M4 5.500h4M4 8.500h4M4 11.500h4M4 14.500h4M4 23.500h4M4 26.500h4M4 29.500h4M4 32.500h4" />
          <path d="M4 17.500h4" stroke="#f5a623" />
          <path d="M4 35.500h4" stroke="#7ed321" />
        </Icon>
      </Meter>
    </Page>
  );
}

export default App;
